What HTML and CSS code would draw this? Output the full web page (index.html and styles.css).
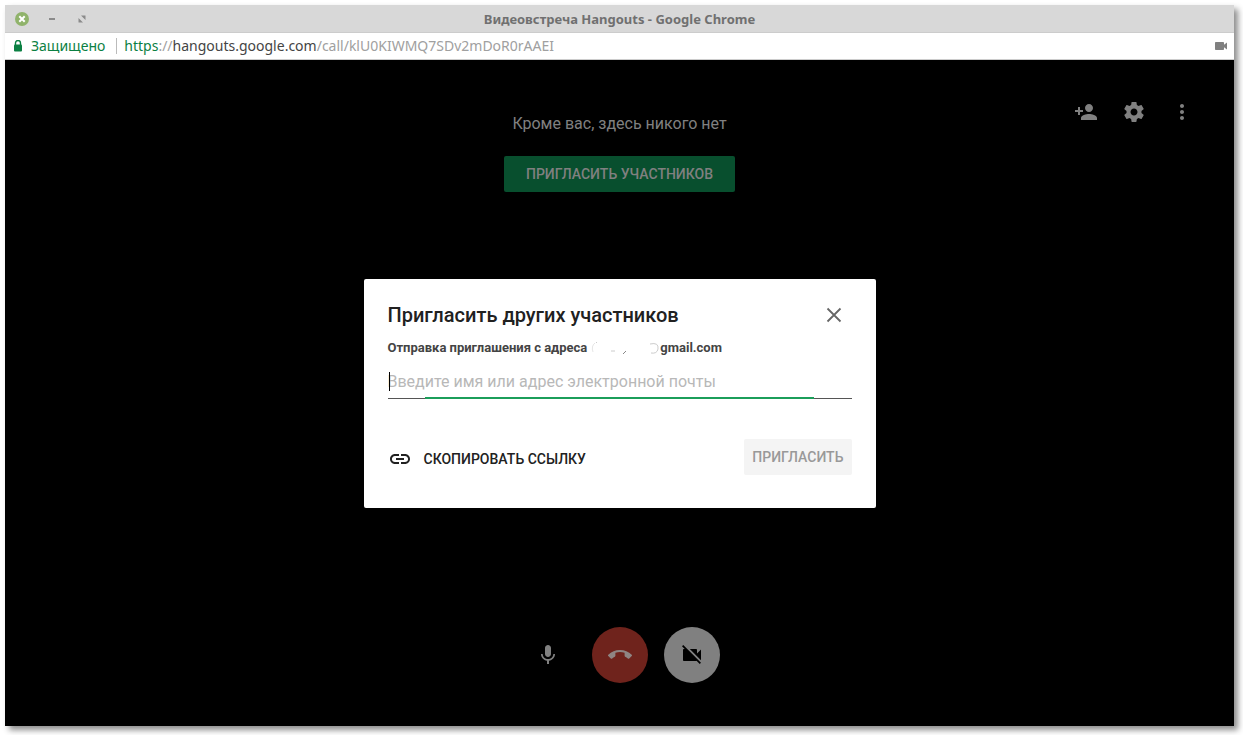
FILE: index.html
```html
<!DOCTYPE html>
<html lang="ru">
<head>
<meta charset="utf-8">
<title>Видеовстреча Hangouts</title>
<link rel="stylesheet" href="styles.css">
</head>
<body>
<div class="window">
  <header class="titlebar">
    <div class="window-controls">
      <button class="window-btn" type="button" aria-label="Закрыть окно"><svg width="14" height="14" viewBox="0 0 14 14"><circle cx="7" cy="7" r="7" fill="#90b36b"/><path d="M4.300 4.300l5.400 5.400M9.700 4.300l-5.400 5.400" stroke="#fff" stroke-width="2"/></svg></button>
      <button class="window-btn" type="button" aria-label="Свернуть"><svg width="14" height="14" viewBox="0 0 14 14"><path d="M4 7h6" stroke="#8a8a8a" stroke-width="2"/></svg></button>
      <button class="window-btn" type="button" aria-label="Развернуть"><svg width="14" height="14" viewBox="0 0 14 14"><path d="M6 3.500h4.500V8zM3.500 6v4.500H8z" fill="#8a8a8a"/></svg></button>
    </div>
    <h1 class="window-title">Видеовстреча Hangouts - Google Chrome</h1>
  </header>
  <div class="addressbar">
    <svg class="lock" width="10" height="12" viewBox="0 0 10 12"><path d="M2.500 5V3a2.500 2.500 0 0 1 5 0v2" fill="none" stroke="#0b8043" stroke-width="1.400"/><rect x="1" y="4.500" width="8" height="7" rx="1" fill="#0b8043"/></svg>
    <span class="secure">Защищено</span>
    <span class="url"><span class="url-scheme">https</span>://<span class="url-host">hangouts.google.com</span>/call/klU0KIWMQ7SDv2mDoR0rAAEI</span>
    <svg class="camera-indicator" width="12" height="8" viewBox="0 0 12 8"><path d="M0 .8Q0 0 .8 0h7.400Q9 0 9 .8v2L12 .5v7L9 5.200v2q0 .8-.8.8H.8Q0 8 0 7.200z" fill="#808080"/></svg>
  </div>
  <main class="stage">
    <div class="stage-top">
      <section class="empty-call">
        <p class="empty-text">Кроме вас, здесь никого нет</p>
        <button class="invite-btn" type="button">ПРИГЛАСИТЬ УЧАСТНИКОВ</button>
      </section>
      <nav class="tools">
        <button class="icon-btn" type="button" aria-label="Добавить участника"><svg width="24" height="24" viewBox="0 0 24 24"><path d="M15 12c2.210 0 4-1.790 4-4s-1.790-4-4-4-4 1.790-4 4 1.790 4 4 4zm-9-2V7H4v3H1v2h3v3h2v-3h3v-2H6zm9 4c-2.670 0-8 1.340-8 4v2h16v-2c0-2.660-5.330-4-8-4z"/></svg></button>
        <button class="icon-btn" type="button" aria-label="Настройки"><svg width="24" height="24" viewBox="0 0 24 24"><path d="M19.430 12.980c.04-.32.07-.64.07-.98s-.03-.66-.07-.98l2.110-1.650c.19-.15.24-.42.12-.64l-2-3.460c-.12-.22-.39-.3-.61-.22l-2.490 1c-.52-.4-1.080-.73-1.690-.98l-.38-2.650C14.460 2.180 14.250 2 14 2h-4c-.25 0-.46.18-.49.42l-.38 2.650c-.61.25-1.170.59-1.690.98l-2.490-1c-.23-.09-.49 0-.61.22l-2 3.460c-.13.22-.07.49.12.64l2.110 1.650c-.04.32-.07.65-.07.98s.03.66.07.98l-2.110 1.650c-.19.15-.24.42-.12.64l2 3.460c.12.22.39.3.61.22l2.490-1c.52.4 1.080.73 1.690.98l.38 2.650c.03.24.24.42.49.42h4c.25 0 .46-.18.49-.42l.38-2.650c.61-.25 1.170-.59 1.690-.98l2.490 1c.23.09.49 0 .61-.22l2-3.460c.12-.22.07-.49-.12-.64l-2.110-1.650zM12 15.500c-1.930 0-3.500-1.570-3.500-3.500s1.570-3.500 3.500-3.500 3.500 1.570 3.500 3.500-1.570 3.500-3.500 3.500z"/></svg></button>
        <button class="icon-btn" type="button" aria-label="Ещё"><svg width="24" height="24" viewBox="0 0 24 24"><path d="M12 8c1.100 0 2-.9 2-2s-.9-2-2-2-2 .9-2 2 .9 2 2 2zm0 2c-1.100 0-2 .9-2 2s.9 2 2 2 2-.9 2-2-.9-2-2-2zm0 6c-1.100 0-2 .9-2 2s.9 2 2 2 2-.9 2-2-.9-2-2-2z"/></svg></button>
      </nav>
    </div>
    <div class="call-controls">
      <button class="call-btn" type="button" aria-label="Микрофон"><svg width="24" height="24" viewBox="0 0 24 24"><path d="M12 14c1.660 0 2.990-1.340 2.990-3L15 5c0-1.660-1.340-3-3-3S9 3.340 9 5v6c0 1.660 1.340 3 3 3zm5.300-3c0 3-2.540 5.100-5.300 5.100S6.700 14 6.700 11H5c0 3.410 2.720 6.230 6 6.720V21h2v-3.280c3.280-.48 6-3.300 6-6.720h-1.700z"/></svg></button>
      <button class="call-btn call-btn-end" type="button" aria-label="Завершить вызов"><svg width="24" height="24" viewBox="0 0 24 24"><path d="M12 9c-1.600 0-3.150.25-4.600.72v3.100c0 .39-.23.74-.56.9-.98.49-1.870 1.120-2.660 1.850-.18.18-.43.28-.7.28-.28 0-.53-.11-.71-.29L.29 13.080c-.18-.17-.29-.42-.29-.7 0-.28.11-.53.29-.71C3.340 8.780 7.460 7 12 7s8.660 1.780 11.710 4.670c.18.18.29.43.29.71 0 .28-.11.53-.29.710l-2.480 2.480c-.18.18-.43.29-.71.29-.27 0-.52-.11-.7-.28-.79-.74-1.690-1.360-2.670-1.850-.33-.16-.56-.5-.56-.9v-3.100C15.150 9.250 13.600 9 12 9z"/></svg></button>
      <button class="call-btn call-btn-camera" type="button" aria-label="Включить камеру"><svg width="24" height="24" viewBox="0 0 24 24"><path d="M21 6.500l-4 4V7c0-.55-.45-1-1-1H9.820L21 17.180V6.500zM3.270 2L2 3.270 4.730 6H4c-.55 0-1 .45-1 1v10c0 .55.45 1 1 1h12c.21 0 .39-.08.54-.18L19.730 21 21 19.730 3.270 2z"/></svg></button>
    </div>
    <div class="overlay">
      <section class="dialog" role="dialog" aria-labelledby="dialog-title">
        <div class="dialog-header">
          <h2 class="dialog-title" id="dialog-title">Пригласить других участников</h2>
          <button class="close-btn" type="button" aria-label="Закрыть"><svg width="24" height="24" viewBox="0 0 24 24"><path d="M5.500 5.500l13 13M18.500 5.500l-13 13" stroke="#666" stroke-width="1.800"/></svg></button>
        </div>
        <label class="sender" for="invitee"><span>Отправка приглашения с адреса</span><svg class="hidden-name" width="73" height="16" viewBox="0 0 73 16" fill="none" stroke="#ccc"><path d="M8 3q-4 3-2 9" opacity=".5"/><path d="M9 3l1-1M24 11h4"/><path d="M36 14l3-3" stroke="#888"/><path d="M63 4q9-2 8 5-1 5-7 4"/></svg><span>gmail.com</span></label>
        <div class="field">
          <input class="field-input" id="invitee" type="text" placeholder="Введите имя или адрес электронной почты">
          <span class="caret"></span>
        </div>
        <div class="dialog-actions">
          <button class="copy-btn" type="button"><svg width="24" height="24" viewBox="0 0 24 24"><path d="M3.900 12c0-1.710 1.390-3.100 3.100-3.100h4V7H7c-2.760 0-5 2.240-5 5s2.240 5 5 5h4v-1.900H7c-1.710 0-3.100-1.390-3.100-3.100zM8 13h8v-2H8v2zm9-6h-4v1.900h4c1.710 0 3.100 1.390 3.100 3.100s-1.390 3.100-3.100 3.100h-4V17h4c2.760 0 5-2.240 5-5s-2.240-5-5-5z"/></svg><span>СКОПИРОВАТЬ ССЫЛКУ</span></button>
          <button class="submit-btn" type="button" disabled>ПРИГЛАСИТЬ</button>
        </div>
      </section>
    </div>
  </main>
</div>
</body>
</html>
```
FILE: styles.css
```css
* {
  box-sizing: border-box;
}

body {
  margin: 0;
  background: #fff;
  font-family: Roboto, "Liberation Sans", sans-serif;
}

button {
  display: flex;
  align-items: center;
  justify-content: center;
  margin: 0;
  padding: 0;
  border: 0;
  background: none;
  font: inherit;
  color: inherit;
}

svg {
  display: block;
  flex: none;
}

h1, h2, p {
  margin: 0;
}

.window {
  display: flex;
  flex-direction: column;
  height: calc(100vh - 14px);
  margin: 5px 9px 9px 5px;
  box-shadow: 4px 4px 6px rgba(0, 0, 0, 0.45);
}

.titlebar {
  display: grid;
  grid-template-columns: 1fr auto 1fr;
  align-items: center;
  height: 28px;
  padding: 0 10px;
  background: #d8d8d8;
  border-bottom: 1px solid #ccc;
}

.window-controls {
  display: flex;
  gap: 16px;
}

.window-title {
  font: bold 13px/20px "Noto Sans", sans-serif;
  color: #707070;
}

.addressbar {
  display: flex;
  align-items: center;
  height: 27px;
  padding: 0 7px 0 8px;
  background: #fff;
  border-bottom: 1px solid #ccc;
  font: 14px/20px "Noto Sans", sans-serif;
}

.secure {
  margin: 0 11px 0 8px;
  color: #0b8043;
}

.url {
  flex: 1;
  padding-left: 7px;
  border-left: 1px solid #bbb;
  line-height: 16px;
  color: #a0a0a0;
}

.url-scheme {
  color: #0b8043;
}

.url-host {
  color: #444;
}

.stage {
  position: relative;
  display: flex;
  flex: 1;
  flex-direction: column;
  justify-content: space-between;
  padding: 40px 40px 43px;
  background: #000;
  color: #808080;
}

.stage-top {
  display: grid;
  grid-template-columns: 1fr auto 1fr;
}

.empty-call {
  grid-column: 2;
  display: flex;
  flex-direction: column;
  align-items: center;
  gap: 20px;
  padding-top: 12px;
}

.empty-text {
  font-size: 16px;
  line-height: 24px;
}

.invite-btn {
  height: 36px;
  padding: 0 22px;
  border-radius: 2px;
  background: #084f2e;
  font-size: 14px;
  font-weight: 500;
}

.tools {
  display: flex;
  justify-content: flex-end;
  align-items: flex-start;
  gap: 24px;
}

.icon-btn,
.call-btn {
  fill: #808080;
}

.call-controls {
  display: flex;
  justify-content: center;
  gap: 16px;
}

.call-btn {
  width: 56px;
  height: 56px;
  border-radius: 50%;
}

.call-btn-end {
  background: #6f231c;
  fill: #8f8583;
}

.call-btn-camera {
  background: #808080;
  fill: #000;
}

.overlay {
  position: absolute;
  inset: 0;
  display: flex;
  align-items: center;
  justify-content: center;
}

.dialog {
  width: 512px;
  max-width: 100%;
  padding: 18px 24px 33px;
  border-radius: 2px;
  background: #fff;
  color: #212121;
}

.dialog-header {
  display: flex;
  align-items: center;
  justify-content: space-between;
}

.dialog-title {
  font-size: 20px;
  font-weight: 500;
  line-height: 24px;
}

.close-btn {
  width: 36px;
  height: 36px;
}

.sender {
  display: flex;
  margin-top: 7px;
  font-size: 13px;
  font-weight: 700;
  line-height: 16px;
  color: #444;
}

.field {
  position: relative;
  margin-top: 8px;
}

.field::after {
  content: "";
  position: absolute;
  left: 8%;
  right: 8%;
  bottom: 0;
  height: 2px;
  background: #1b9e5a;
}

.field-input {
  display: block;
  width: 100%;
  height: 35px;
  padding: 2px 0 0;
  border: 0;
  border-bottom: 1px solid #555;
  outline: 0;
  background: none;
  font: 16px/24px Roboto, "Liberation Sans", sans-serif;
  color: #212121;
}

.field-input::placeholder {
  color: #b8b8b8;
  opacity: 1;
}

.caret {
  position: absolute;
  left: 1px;
  top: 8px;
  width: 1px;
  height: 19px;
  background: #000;
}

.dialog-actions {
  display: flex;
  align-items: center;
  justify-content: space-between;
  margin-top: 40px;
  font-size: 14px;
  font-weight: 500;
}

.copy-btn {
  gap: 12px;
  height: 36px;
  padding-top: 4px;
  fill: #212121;
}

.submit-btn {
  height: 36px;
  padding: 0 8px;
  border-radius: 2px;
  background: #f4f4f4;
  color: #999;
}
```
